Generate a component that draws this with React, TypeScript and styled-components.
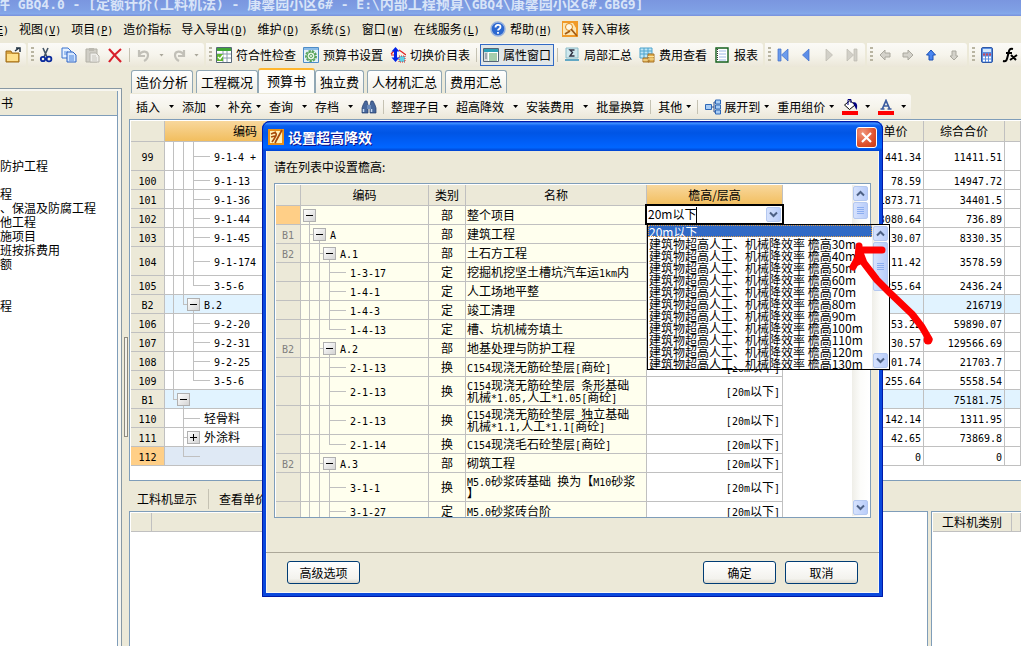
import React from 'react';
import styled, { createGlobalStyle, css } from 'styled-components';

const BEIGE = '#ece9d8';
const LINE = '#c0c0c0';
const FRAME = '#7f9db9';
const ORANGE = 'linear-gradient(#f8d79c, #f2be5e)';

const GlobalStyle = createGlobalStyle`
  *, *::before, *::after { box-sizing: border-box; }
  body {
    margin: 0;
    overflow: hidden;
    background: ${BEIGE};
    color: #000;
    font: 12px/14px 'Noto Sans CJK SC', sans-serif;
  }
  button, input, select { font: inherit; color: inherit; margin: 0; }
`;

/* Latin letters and digits take half the width of a Chinese character. */
const Half = styled.span`
  font-family: 'DejaVu Sans Mono', monospace;
  font-size: 10px;
  line-height: 0;
`;

function Mixed({ children }: { children: string }) {
  return (
    <>
      {children.split(/([\x20-\x7e]+)/).filter(Boolean).map((part, i) =>
        /^[\x20-\x7e]+$/.test(part) ? <Half key={i}>{part}</Half> : part
      )}
    </>
  );
}

/* ---------- window frame ---------- */

const Window = styled.div`
  position: relative;
  display: flex;
  flex-direction: column;
  height: 100vh;
  overflow: hidden;
`;

const TitleBar = styled.header`
  flex: none;
  display: flex;
  align-items: flex-end;
  height: 16px;
  padding-bottom: 5px;
  overflow: hidden;
  background: linear-gradient(#7a96df, #7f9fe4 60%, #84a8ea 85%, #7890dc);
  color: #d8e4f8;
  font-size: 14px;
  font-weight: bold;
  line-height: 16px;
  white-space: pre;
  ${Half} { font-size: 13px; }
`;

const TitleText = styled.span`
  margin-left: -4px;
`;

const MenuBar = styled.nav`
  flex: none;
  display: flex;
  align-items: center;
  gap: 10px;
  height: 26px;
  margin-left: -9px;
`;

const MenuItem = styled.button`
  display: flex;
  align-items: center;
  gap: 4px;
  flex: none;
  padding: 0;
  border: 0;
  background: none;
  white-space: nowrap;
`;

const ToolRow = styled.div`
  flex: none;
  display: flex;
  gap: 2px;
  padding: 1px 0;
`;

const ToolGroup = styled.div<{ $first?: boolean }>`
  flex: none;
  display: flex;
  align-items: center;
  gap: 1px;
  height: 24px;
  padding: 0 2px 0 ${p => (p.$first ? 2 : 3)}px;
  border-radius: 0 3px 3px 0;
  background: linear-gradient(#fbfaf7, #f6f4ec 50%, #ebe7d8);
`;

const Grip = styled.span`
  width: 3px;
  height: 16px;
  background: repeating-linear-gradient(#b9b5a2 0 2px, transparent 2px 4px);
`;

const ToolButton = styled.button<{ $active?: boolean }>`
  flex: none;
  display: flex;
  align-items: center;
  gap: 4px;
  height: 22px;
  padding: 0 2px;
  border: 1px solid ${p => (p.$active ? '#316ac5' : 'transparent')};
  background: ${p => (p.$active ? '#e1e6e8' : 'none')};
  white-space: nowrap;
`;

const Divider = styled.span`
  flex: none;
  width: 1px;
  height: 14px;
  margin: 0 2px;
  background: #c5c2b3;
`;

const Caret = styled.span<{ $dim?: boolean }>`
  width: 5px;
  height: 3px;
  background: ${p => (p.$dim ? '#aaa79b' : '#000')};
  clip-path: polygon(0 0, 100% 0, 50% 100%);
`;

/* ---------- body ---------- */

const Body = styled.div`
  flex: 1;
  display: flex;
  min-height: 0;
`;

const SidePanel = styled.aside`
  flex: none;
  display: flex;
  width: 122px;
  margin-top: 20px;
  padding: 2px 3px 0 0;
  border: solid #8798a4;
  border-width: 1px 1px 0 0;
  background: #f7f6f0;
`;

const SideInner = styled.div`
  flex: 1;
  border-right: 1px solid ${FRAME};
  background: #fff;
`;

const SideHeader = styled.div`
  height: 25px;
  padding: 0 1px;
  border-bottom: 1px solid ${FRAME};
  background: ${BEIGE};
  line-height: 24px;
`;

const TreeList = styled.ul`
  margin: 0;
  padding: 1px 0;
  list-style: none;
`;

const TreeItem = styled.li`
  height: 14px;
  white-space: nowrap;
`;

const Splitter = styled.div`
  flex: none;
  width: 7px;
  padding: 269px 1px 0 2px;
`;

const SplitHandle = styled.div`
  height: 100px;
  border: 1px solid #8c8a80;
  background: #f4f2ea;
`;

const Main = styled.main`
  flex: 1;
  display: flex;
  flex-direction: column;
  min-width: 0;
`;

const Tabs = styled.div`
  flex: none;
  display: flex;
  align-items: flex-end;
  gap: 3px;
  height: 25px;
  padding-left: 2px;
`;

const Tab = styled.button<{ $active?: boolean }>`
  flex: none;
  height: 23px;
  padding: 0 4px;
  border: 1px solid #91a7b4;
  border-bottom: 0;
  border-radius: 3px 3px 0 0;
  background: linear-gradient(#fff, #f1efe6);
  font-size: 13px;
  white-space: nowrap;
  ${p => p.$active && css`
    height: 25px;
    margin: 0 -3px;
    padding: 0 8px 2px;
    border-top: 2px solid #ffb62f;
    background: #fcfcfa;
  `}
`;

const SubTools = styled.div`
  flex: none;
  align-self: flex-start;
  display: flex;
  align-items: center;
  height: 25px;
  margin: 1px 0 0 1px;
  padding: 0 1px 0 2px;
  border-radius: 0 3px 0 0;
  background: linear-gradient(#fbfaf7, #f6f4ec 50%, #ebe7d8);
  ${Divider} { margin: 0 3px 0 2px; }
`;

const SubButton = styled.button<{ $gap?: number }>`
  flex: none;
  display: flex;
  align-items: center;
  gap: ${p => p.$gap ?? 9}px;
  padding: 0 4px;
  border: 0;
  background: none;
  white-space: nowrap;
`;

const IconLabel = styled.span`
  display: flex;
  align-items: center;
  gap: 3px;
`;

const GridPanel = styled.section`
  flex: none;
  padding: 1px 0 14px 1px;
  border: solid ${FRAME};
  border-width: 1px 0 1px 1px;
  background: #fff;
`;

/* ---------- tables ---------- */

const Table = styled.table<{ $width?: string }>`
  width: ${p => p.$width ?? '100%'};
  table-layout: fixed;
  border-collapse: separate;
  border-spacing: 0;
  line-height: 12px;
`;

const Col = styled.col<{ $w?: number }>`
  width: ${p => (p.$w ? `${p.$w}px` : 'auto')};
`;

const Th = styled.th<{ $hot?: boolean }>`
  height: 21px;
  padding: 0;
  border: solid ${LINE};
  border-width: 0 1px 1px 0;
  background: ${p => (p.$hot ? ORANGE : BEIGE)};
  font-weight: normal;
  white-space: nowrap;
`;

const Td = styled.td<{ $bg?: string; $align?: string; $tall?: boolean; $muted?: boolean }>`
  height: ${p => (p.$tall ? 29 : 19)}px;
  padding: 0 2px 1px 1px;
  border: solid ${LINE};
  border-width: 0 1px 1px 0;
  background: ${p => p.$bg ?? '#fff'};
  color: ${p => (p.$muted ? '#808080' : '#000')};
  text-align: ${p => p.$align ?? 'left'};
  vertical-align: middle;
  white-space: pre;
  overflow: hidden;
`;

const CodeTd = styled(Td)`
  padding: 0;
`;

const NumTd = styled(Td)`
  padding: 0 0 1px;
  text-align: center;
`;

const CodeLine = styled.div<{ $tall?: boolean; $root?: boolean }>`
  display: flex;
  align-items: center;
  height: ${p => (p.$tall ? 28 : 18)}px;
  padding-left: ${p => (p.$root ? 2 : 8)}px;
`;

const ink = `linear-gradient(${LINE}, ${LINE})`;

const Guide = styled.span<{ $kind: string; $w: number }>`
  flex: none;
  align-self: stretch;
  width: ${p => p.$w}px;
  margin-bottom: -1px;
  background-repeat: no-repeat;
  ${p => p.$kind === '|' && css`
    background-image: ${ink};
    background-size: 1px 100%;
  `}
  ${p => (p.$kind === 't' || p.$kind === 'l') && css`
    background-image: ${ink}, ${ink};
    background-size: 1px ${p.$kind === 't' ? '100%' : '50%'}, 100% 1px;
    background-position: 0 0, 0 50%;
  `}
`;

const ToggleSlot = styled.span<{ $open?: boolean }>`
  flex: none;
  align-self: stretch;
  display: flex;
  align-items: center;
  margin-bottom: -1px;
  background: ${p => (p.$open ? ink : 'none')} 6px 100% / 1px 50% no-repeat;
`;

const Toggle = styled.button`
  display: flex;
  width: 13px;
  height: 13px;
  padding: 0;
  border: 1px solid #b0b0b0;
  background: linear-gradient(135deg, #fff, #d4d4d4);
`;

const CodeText = styled.span`
  margin-left: 4px;
`;

interface Code { g: string; box?: '-' | '+'; text?: string; root?: boolean }

function CodeCell({ code, bg, tall }: { code: Code; bg?: string; tall?: boolean }) {
  const marks = code.g.split('');
  return (
    <CodeTd $bg={bg} $tall={tall}>
      <CodeLine $tall={tall} $root={code.root}>
        {marks.map((k, i) => (
          <Guide key={i} $kind={k} $w={i < marks.length - 1 ? 10 : code.box ? 4 : 17} />
        ))}
        {code.box && (
          <ToggleSlot $open={code.box === '-'}>
            <Toggle aria-label={code.box === '-' ? '折叠' : '展开'}>
              <svg width="11" height="11" viewBox="0 0 11 11" shapeRendering="crispEdges">
                <path d={code.box === '-' ? 'M2 5h7v1H2z' : 'M2 5h7v1H2zM5 2h1v7H5z'} fill="#000" />
              </svg>
            </Toggle>
          </ToggleSlot>
        )}
        {code.text && <CodeText><Mixed>{code.text}</Mixed></CodeText>}
      </CodeLine>
    </CodeTd>
  );
}

const BLUE_ROW = '#e1f3ff';
const SEL_ROW = '#dfe9f5';

interface MainRow { no: string; code: Code; price: string; total: string; tall?: boolean; bg?: string }
const mainRows: MainRow[] = [
  { no: '99', code: { g: '||t', text: '9-1-4 +' }, price: '441.34', total: '11411.51', tall: true },
  { no: '100', code: { g: '||t', text: '9-1-13' }, price: '78.59', total: '14947.72' },
  { no: '101', code: { g: '||t', text: '9-1-36' }, price: '1873.71', total: '34401.5' },
  { no: '102', code: { g: '||t', text: '9-1-44' }, price: '3080.64', total: '736.89' },
  { no: '103', code: { g: '||t', text: '9-1-45' }, price: '30.07', total: '8330.35' },
  { no: '104', code: { g: '||t', text: '9-1-174' }, price: '11.42', total: '3578.59', tall: true },
  { no: '105', code: { g: '||l', text: '3-5-6' }, price: '255.64', total: '2436.24' },
  { no: 'B2', code: { g: '|l', box: '-', text: 'B.2' }, price: '', total: '216719', bg: BLUE_ROW },
  { no: '106', code: { g: '| t', text: '9-2-20' }, price: '53.22', total: '59890.07' },
  { no: '107', code: { g: '| t', text: '9-2-31' }, price: '30.57', total: '129566.69' },
  { no: '108', code: { g: '| t', text: '9-2-25' }, price: '01.74', total: '21703.7' },
  { no: '109', code: { g: '| l', text: '3-5-6' }, price: '255.64', total: '5558.54' },
  { no: 'B1', code: { g: 'l', box: '-' }, price: '', total: '75181.75', bg: BLUE_ROW },
  { no: '110', code: { g: ' t', text: '轻骨料' }, price: '142.14', total: '1311.95' },
  { no: '111', code: { g: ' t', box: '+', text: '外涂料' }, price: '42.65', total: '73869.8' },
  { no: '112', code: { g: ' l' }, price: '0', total: '0', bg: SEL_ROW },
];

interface DialogRow { no: string; code: Code; kind: string; name: string; tall?: boolean }
const dialogRows: DialogRow[] = [
  { no: '', code: { g: '', box: '-', root: true }, kind: '部', name: '整个项目' },
  { no: 'B1', code: { g: 't', box: '-', text: 'A' }, kind: '部', name: '建筑工程' },
  { no: 'B2', code: { g: '|t', box: '-', text: 'A.1' }, kind: '部', name: '土石方工程' },
  { no: '', code: { g: '||t', text: '1-3-17' }, kind: '定', name: '挖掘机挖坚土槽坑汽车运1km内' },
  { no: '', code: { g: '||t', text: '1-4-1' }, kind: '定', name: '人工场地平整' },
  { no: '', code: { g: '||t', text: '1-4-3' }, kind: '定', name: '竣工清理' },
  { no: '', code: { g: '||l', text: '1-4-13' }, kind: '定', name: '槽、坑机械夯填土' },
  { no: 'B2', code: { g: '|t', box: '-', text: 'A.2' }, kind: '部', name: '地基处理与防护工程' },
  { no: '', code: { g: '||t', text: '2-1-13' }, kind: '换', name: 'C154现浇无筋砼垫层[商砼]' },
  { no: '', code: { g: '||t', text: '2-1-13' }, kind: '换', name: 'C154现浇无筋砼垫层 条形基础\n机械*1.05,人工*1.05[商砼]', tall: true },
  { no: '', code: { g: '||t', text: '2-1-13' }, kind: '换', name: 'C154现浇无筋砼垫层 独立基础\n机械*1.1,人工*1.1[商砼]', tall: true },
  { no: '', code: { g: '||l', text: '2-1-14' }, kind: '换', name: 'C154现浇毛石砼垫层[商砼]' },
  { no: 'B2', code: { g: '|t', box: '-', text: 'A.3' }, kind: '部', name: '砌筑工程' },
  { no: '', code: { g: '||t', text: '3-1-1' }, kind: '换', name: 'M5.0砂浆砖基础 换为【M10砂浆\n】', tall: true },
  { no: '', code: { g: '||t', text: '3-1-27' }, kind: '定', name: 'M5.0砂浆砖台阶' },
];

/* ---------- lower area ---------- */

const LowerTabs = styled.div`
  flex: none;
  display: flex;
  align-items: center;
  height: 30px;
  padding: 5px 0 0 2px;
  ${Divider} { height: 20px; margin: 0 4px 0 5px; }
`;

const LowerTab = styled.button`
  padding: 0 6px;
  border: 0;
  background: none;
`;

const LowerPanels = styled.div`
  flex: 1;
  display: flex;
  gap: 3px;
  min-height: 0;
`;

const LowerPanel = styled.section<{ $side?: boolean }>`
  flex: ${p => (p.$side ? '0 0 90px' : '1')};
  padding: 1px 0 0 1px;
  border: solid ${FRAME};
  border-width: 1px ${p => (p.$side ? 0 : 1)}px 0 1px;
  background: #fff;
  ${Th} { height: 19px; }
`;

/* ---------- dialog ---------- */

const Dialog = styled.div`
  position: absolute;
  left: 262px;
  top: 121px;
  width: 621px;
  border: solid #0a48dc;
  border-width: 0 4px 4px;
  border-radius: 8px 8px 0 0;
  background: ${BEIGE};
  box-shadow: inset 0 0 0 1px #f8f7f2;
  outline: 1px solid #0019a8;
  outline-offset: -1px;
`;

const DialogTitle = styled.div`
  display: flex;
  align-items: center;
  gap: 4px;
  height: 30px;
  margin: 0 -4px;
  padding: 2px 6px 0;
  border-radius: 8px 8px 0 0;
  background: linear-gradient(#0a3ec8, #3a8bff 8%, #0a5ff0 16%, #0055e5 40%, #0060fa 75%, #0066ff 88%, #0042cf);
  color: #fff;
  font-size: 14px;
  font-weight: bold;
  text-shadow: 1px 1px #0f1089;
`;

const CloseButton = styled.button`
  display: flex;
  align-items: center;
  justify-content: center;
  width: 21px;
  height: 21px;
  margin-left: auto;
  padding: 0;
  border: 1px solid #fff;
  border-radius: 3px;
  background: radial-gradient(circle at 30% 25%, #f0977c, #e0512c 60%, #c43a14);
`;

const DialogBody = styled.div`
  padding: 0 8px 34px;
`;

const Prompt = styled.p`
  margin: 0;
  height: 32px;
  line-height: 32px;
`;

const ListFrame = styled.div`
  display: flex;
  justify-content: space-between;
  height: 335px;
  padding: 1px;
  overflow: hidden;
  border: 1px solid ${FRAME};
  background: #fff;
`;

const ScrollTrack = styled.div`
  flex: none;
  display: flex;
  flex-direction: column;
  width: 17px;
  padding: 1px;
  background: linear-gradient(90deg, #efeee8, #fcfcfa 50%, #fff);
`;

const scrollPart = css`
  flex: none;
  display: flex;
  align-items: center;
  justify-content: center;
  padding: 0;
  border: 1px solid #b4c8f0;
  border-radius: 2px;
  background: linear-gradient(90deg, #d6e2fd, #b9cdfa);
`;

const ScrollButton = styled.button`
  ${scrollPart}
  height: 15px;
`;

const ScrollThumb = styled.div<{ $h: number }>`
  ${scrollPart}
  height: ${p => p.$h}px;
  margin: 1px 0 auto;
`;

const DialogFooter = styled.div`
  display: flex;
  gap: 9px;
  padding: 8px 21px 9px;
  border-top: 1px solid #aca899;
`;

const PushButton = styled.button<{ $pushed?: boolean }>`
  width: 73px;
  height: 23px;
  margin-right: ${p => (p.$pushed ? 'auto' : '0')};
  padding: 0;
  border: 1px solid #003c74;
  border-radius: 3px;
  background: linear-gradient(#fff, #f3f2ed 80%, #dcd8cc);
`;

/* editor laid over the active cell, with its open list */
const Editor = styled.div`
  position: absolute;
  left: 379px;
  top: 83px;
  width: 139px;
  display: flex;
  align-items: center;
  height: 21px;
  padding: 0 1px;
  border: 2px solid #000;
  background: #fff;
`;

const EditorInput = styled.input`
  field-sizing: content;
  height: 16px;
  padding: 0 0 2px;
  border: 0;
  border-right: 1px solid #000;
  outline: 0;
  background: none;
`;

const EditorButton = styled.button`
  ${scrollPart}
  width: 15px;
  height: 15px;
  margin-left: auto;
`;

const Popup = styled.div`
  position: absolute;
  left: 381px;
  top: 103px;
  width: 243px;
  display: flex;
  border: 1px solid #000;
  background: #fff;
`;

const OptionList = styled.select`
  flex: 1;
  height: 144px;
  padding: 0;
  border: 0;
  outline: 0;
  overflow: hidden;
  background: #fff;
  option {
    display: flex;
    align-items: center;
    height: 12px;
    min-height: 12px;
    padding: 0 1px;
  }
  option:checked {
    outline: 1px dotted #e09c46;
    outline-offset: -1px;
    background: linear-gradient(#316ac5, #316ac5);
    -webkit-text-fill-color: #fff;
  }
`;

const Marker = styled.svg`
  position: absolute;
  left: 840px;
  top: 235px;
  pointer-events: none;
`;

/* ---------- icons ---------- */

const icons: Record<string, React.ReactNode> = {
  folder: <><path d="M1 4h5l1 2h7v9H1z" fill="#d9a441" stroke="#9c6a17" /><path d="M2 7h11v7H2z" fill="#ffe08a" /><path d="M10 4l4-3m-3 0h4v4" fill="none" stroke="#234" strokeWidth="1.5" /></>,
  cut: <><path d="M5 1l4 9M10 1L6 10" stroke="#456" strokeWidth="1.6" /><circle cx="5" cy="12" r="2.2" fill="none" stroke="#0a2a9c" strokeWidth="1.8" /><circle cx="11" cy="12" r="2.4" fill="none" stroke="#0a2a9c" strokeWidth="1.8" /></>,
  copy: <><path d="M1 1h6l3 3v7H1z" fill="#e6f1ff" stroke="#3a74d0" /><path d="M3 5h4M3 7h4" stroke="#5a90e0" /><path d="M6 5h6l3 3v7H6z" fill="#d5e7ff" stroke="#2d62c4" /><path d="M8 9h5M8 11h5M8 13h5" stroke="#4a84dc" /></>,
  paste: <><path d="M2 2h11v13H2z" fill="#d0cec6" stroke="#b2b0a6" /><path d="M5 1h5v3H5z" fill="#bbb9b0" /><path d="M6 6h6l3 3v6H6z" fill="#efeeea" stroke="#b8b6ae" /><path d="M8 9h4M8 11h5M8 13h5" stroke="#c8c6be" /></>,
  del: <path d="M2 2l12 13M14 2C9 6 6 9 2 15" fill="none" stroke="#d8202c" strokeWidth="2.2" />,
  undo: <path d="M3 3v6h6M3 8c3-5 9-4 9 0 0 3-2 5-4 6" fill="none" stroke="#c2c0b8" strokeWidth="2.2" />,
  redo: <path d="M13 3v6H7M13 8C10 3 4 4 4 8c0 3 2 5 4 6" fill="none" stroke="#c2c0b8" strokeWidth="2.2" />,
  check: <><path d="M.5.5h15v15H.5z" fill="#fff" stroke="#567" /><path d="M1 1h14v3H1z" fill="#3fa535" /><path d="M1 7h14M1 11h14M7 4v11M11 4v11" stroke="#8a9cac" /><path d="M1 7h6v7H1z" fill="#5db52c" /><path d="M2 10l2 2 3-4" fill="none" stroke="#fff" strokeWidth="1.4" /></>,
  gear: <><path d="M.5.5h15v15H.5z" fill="#e4f1fa" stroke="#4d8cc8" /><path d="M1 1h14v2H1z" fill="#8abce8" /><circle cx="8" cy="9" r="5" fill="none" stroke="#58a45c" strokeWidth="2" strokeDasharray="2.4 1" /><circle cx="8" cy="9" r="4" fill="#e4f4e2" stroke="#58a45c" /><circle cx="8" cy="9" r="1.500" fill="#fff" stroke="#58a45c" /></>,
  swap: <><path d="M1 7l3-3M9 3l3 2 4 3M1 8h3" fill="none" stroke="#e02020" strokeWidth="1.2" /><path d="M9 9h6v6H9z" fill="#5ed0e6" stroke="#e02020" strokeDasharray="1 1" /><path d="M5.500 0l4 4.500H7v6h2.500L5.500 15l-4-4.500H4v-6H1.500z" fill="#0022e8" /></>,
  props: <><path d="M.5 1.500h15v13H.5z" fill="#fff" stroke="#567" /><path d="M1 2h14v3H1z" fill="#2ba0b8" /><path d="M1 5h4v9H1z" fill="#d8dcdc" /><path d="M6 7h8M6 9h8M6 11h8M6 13h8" stroke="#4c9c5a" /><path d="M2 7h2M2 9h2M2 11h2" stroke="#678" /></>,
  sum: <><path d="M2 1h12v10H2z" fill="#cfe8ee" stroke="#8bbcc8" /><path d="M10.500 3H6l2.500 2.500L6 9h4.500" fill="none" stroke="#334" strokeWidth="1.4" /><path d="M1 12h14v2H1z" fill="#62a8c4" /></>,
  cost: <><path d="M1 1h12v10H1z" fill="#bfe6f6" stroke="#4da3cc" /><path d="M1 4h12M1 7h12M5 1v10M9 1v10" stroke="#4da3cc" /><path d="M4 11h6v4H4zM9 7h6v8H9z" fill="#e0b050" stroke="#a8742a" /><path d="M9 9.500h6M9 12h6M4 13h5" stroke="#fbe3a0" /></>,
  report: <><path d="M2 1h12v14H2z" fill="#fff" stroke="#14601e" strokeWidth="1.4" /><path d="M5 4h7M5 7h7M5 10h7M5 13h7" stroke="#9cb8e8" /><path d="M3.500 2v12" stroke="#333" strokeDasharray="1 1" /></>,
  first: <path d="M3 2h3v12H3zM13 2v12L6.500 8z" fill="#6c9cec" stroke="#3c6cc8" strokeWidth=".7" />,
  prev: <path d="M11 2v12L4.500 8z" fill="#5c8ee8" stroke="#3c6cc8" strokeWidth=".7" />,
  next: <path d="M5 2v12l6.500-6z" fill="#d2d0c8" stroke="#bbb9b0" strokeWidth=".7" />,
  last: <path d="M3 2v12l6.500-6zM10 2h3v12h-3z" fill="#d2d0c8" stroke="#bbb9b0" strokeWidth=".7" />,
  left: <path d="M3 8l5-5v3h5v4H8v3z" fill="#d4d2ca" stroke="#aaa89e" />,
  right: <path d="M13 8L8 3v3H3v4h5v3z" fill="#d4d2ca" stroke="#aaa89e" />,
  up: <path d="M8 3l4.500 5H10v5H6V8H3.500z" fill="#4a86f0" stroke="#1c50b4" />,
  down: <path d="M8 13l4-4H10V4H6v5H4z" fill="#d4d2ca" stroke="#aaa89e" />,
  calc: <><rect x="2.500" y=".5" width="11" height="15" rx="1.500" fill="#5b8ee0" stroke="#2d58a8" /><path d="M4 2h8v3H4z" fill="#d4e8fc" /><path d="M4 7.500h8" stroke="#c84858" strokeWidth="2" strokeDasharray="2 1" /><path d="M4 10.500h8M4 13.500h8" stroke="#fff" strokeWidth="2" strokeDasharray="2 1" /></>,
  fx: <path d="M11 2C7 1 7 4 6 8s-1 7-5 6M4 6h6M9 8l5 5M15 8l-7 5" fill="none" stroke="#000" strokeWidth="2" />,
  help: <><circle cx="8" cy="8" r="7" fill="#2c68d0" stroke="#9bb4dc" strokeWidth="1.500" /><path d="M5.500 6.500c0-3.500 5-3.500 5-.5 0 2-2.500 2-2.500 3.500M8 11v1.700" fill="none" stroke="#fff" strokeWidth="1.800" /></>,
  audit: <><path d="M0 0h16v16H0z" fill="#f09a28" /><path d="M1 2h10l3 5v7H1z" fill="#fbe6b4" /><circle cx="7" cy="6" r="3.500" fill="#fff8e4" stroke="#e08818" /><path d="M9 8l6 7M3 13l5-3" stroke="#a05a14" strokeWidth="1.800" /></>,
  find: <><path d="M2 6l2-4h2l1 4v8H1V9zM14 6l-2-4h-2L9 6v8h6V9z" fill="#48689c" stroke="#243c6c" strokeWidth=".7" /><path d="M6 6h4v4H6z" fill="#6c8cbc" /><path d="M2.500 10v3M10.500 10v3" stroke="#c8dcf4" strokeWidth="1.500" /></>,
  expand: <><path d="M6 8h3V3h2M9 8v5h2" fill="none" stroke="#2c4c8c" /><path d="M.5 5.500h6v5h-6zM10.500 1h5v4h-5zM10.500 6h5v4h-5zM10.500 11h5v4h-5z" fill="#a8ccf4" stroke="#2e68b8" /></>,
  bucket: <><path d="M2.500 6L8 1.500l5 4.500-5.500 4.500z" fill="#fff" stroke="#000" /><path d="M6 6V.5h3V4" fill="none" stroke="#000080" /><path d="M11 3c4 0 5 3 3.500 8L12 6z" fill="#000080" /><path d="M0 12h16v4H0z" fill="#f00" /></>,
  fontColor: <><path d="M4.500 9.500L8 1.500l3.500 8M5.500 7h5M2.500 10h4M9.500 10h4" fill="none" stroke="#3c5ca0" strokeWidth="1.700" /><path d="M0 12h16v4H0z" fill="#f00" /></>,
  app: <><path d="M0 0h16v16H0z" fill="#e89018" /><path d="M2 2h12v12H2z" fill="#fff2b8" /><path d="M3 5l5-2M3 8l4-1M7 4c3 0 0 5-3 9M14 1L8 12l-1 2" fill="none" stroke="#a84a08" strokeWidth="1.700" /></>,
};

function Icon({ name }: { name: string }) {
  return <svg width="16" height="16" viewBox="0 0 16 16" aria-hidden="true">{icons[name]}</svg>;
}

function Chevron({ up }: { up?: boolean }) {
  return (
    <svg width="9" height="7" viewBox="0 0 9 7" aria-hidden="true">
      <path d={up ? 'M1 5.500l3.500-3.500L8 5.500' : 'M1 1.500L4.500 5 8 1.500'} fill="none" stroke="#4d6185" strokeWidth="2" />
    </svg>
  );
}

function ThumbGrip() {
  return (
    <svg width="7" height="8" viewBox="0 0 7 8" aria-hidden="true" shapeRendering="crispEdges">
      <path d="M0 0h7v1H0zM0 2h7v1H0zM0 4h7v1H0zM0 6h7v1H0z" fill="#8caef0" />
    </svg>
  );
}

function Tool({ icon, label, active }: { icon: string; label?: string; active?: boolean }) {
  return (
    <ToolButton $active={active} aria-label={label ?? icon}>
      <Icon name={icon} />
      {label}
    </ToolButton>
  );
}

const menus: { text: string; hot?: string; icon?: string }[] = [
  { text: '', hot: 'E' },
  { text: '视图', hot: 'V' },
  { text: '项目', hot: 'P' },
  { text: '造价指标' },
  { text: '导入导出', hot: 'D' },
  { text: '维护', hot: 'D' },
  { text: '系统', hot: 'S' },
  { text: '窗口', hot: 'W' },
  { text: '在线服务', hot: 'L' },
  { text: '帮助', hot: 'H', icon: 'help' },
  { text: '转入审核', icon: 'audit' },
];

const treeItems = ['', '', '', '防护工程', '', '程', '、保温及防腐工程', '他工程', '施项目', '班按拆费用', '额', '', '', '程'];

const heights = [30, 40, 50, 60, 70, 80, 90, 100, 110, 120, 130];

function MenuDrop({ text, gap }: { text: string; gap?: number }) {
  return <SubButton $gap={gap}>{text}<Caret /></SubButton>;
}

function SetupDialog() {
  return (
    <Dialog role="dialog" aria-label="设置超高降效">
      <DialogTitle>
        <Icon name="app" />
        设置超高降效
        <CloseButton aria-label="关闭">
          <svg width="13" height="13" viewBox="0 0 13 13"><path d="M2 2l9 9M11 2l-9 9" stroke="#fff" strokeWidth="2.200" /></svg>
        </CloseButton>
      </DialogTitle>
      <DialogBody>
        <Prompt>请在列表中设置檐高:</Prompt>
        <ListFrame>
          <div>
            <Table $width="507px">
              <colgroup><Col $w={25} /><Col $w={128} /><Col $w={37} /><Col $w={181} /><Col $w={136} /></colgroup>
              <thead>
                <tr><Th /><Th>编码</Th><Th>类别</Th><Th>名称</Th><Th $hot>檐高/层高</Th></tr>
              </thead>
              <tbody>
                {dialogRows.map((r, i) => (
                  <tr key={i}>
                    <NumTd $bg={i === 0 ? '#ffcf87' : BEIGE} $muted><Mixed>{r.no}</Mixed></NumTd>
                    <CodeCell code={r.code} bg="#ffffee" tall={r.tall} />
                    <NumTd $bg="#ffffee">{r.kind}</NumTd>
                    <Td $bg="#ffffee" $tall={r.tall}><Mixed>{r.name}</Mixed></Td>
                    <Td $align="right"><Mixed>[20m以下]</Mixed></Td>
                  </tr>
                ))}
              </tbody>
            </Table>
          </div>
          <ScrollTrack>
            <ScrollButton aria-label="向上"><Chevron up /></ScrollButton>
            <ScrollThumb $h={17}><ThumbGrip /></ScrollThumb>
            <ScrollButton aria-label="向下"><Chevron /></ScrollButton>
          </ScrollTrack>
        </ListFrame>
      </DialogBody>
      <DialogFooter>
        <PushButton $pushed>高级选项</PushButton>
        <PushButton>确定</PushButton>
        <PushButton>取消</PushButton>
      </DialogFooter>
      <Editor>
        <EditorInput aria-label="檐高/层高" defaultValue="20m以下" />
        <EditorButton aria-label="打开列表"><Chevron /></EditorButton>
      </Editor>
      <Popup>
        <OptionList size={12} defaultValue="20" aria-label="檐高">
          <option value="20">20m以下</option>
          {heights.map(h => (
            <option key={h} value={h}>{`建筑物超高人工、机械降效率 檐高${h}m`}</option>
          ))}
        </OptionList>
        <ScrollTrack>
          <ScrollButton aria-label="向上"><Chevron up /></ScrollButton>
          <ScrollThumb $h={49}><ThumbGrip /></ScrollThumb>
          <ScrollButton aria-label="向下"><Chevron /></ScrollButton>
        </ScrollTrack>
      </Popup>
    </Dialog>
  );
}

export default function App() {
  return (
    <Window>
      <GlobalStyle />
      <TitleBar>
        <TitleText><Mixed>{'件 GBQ4.0 - [定额计价(工料机法) - 康馨园小区6# - E:\\内部工程预算\\GBQ4\\康馨园小区6#.GBG9]'}</Mixed></TitleText>
      </TitleBar>
      <MenuBar>
        {menus.map((m, i) => (
          <MenuItem key={i}>
            {m.icon && <Icon name={m.icon} />}
            <span>{m.text}{m.hot && <Half>(<u>{m.hot}</u>)</Half>}</span>
          </MenuItem>
        ))}
      </MenuBar>
      <ToolRow>
        <ToolGroup $first><Tool icon="folder" /></ToolGroup>
        <ToolGroup>
          <Grip /><Tool icon="cut" /><Tool icon="copy" /><Tool icon="paste" /><Tool icon="del" />
          <Divider />
          <Tool icon="undo" /><ToolButton aria-label="撤销列表"><Caret $dim /></ToolButton>
          <Tool icon="redo" /><ToolButton aria-label="恢复列表"><Caret $dim /></ToolButton>
        </ToolGroup>
        <ToolGroup>
          <Grip />
          <Tool icon="check" label="符合性检查" />
          <Tool icon="gear" label="预算书设置" />
          <Tool icon="swap" label="切换价目表" />
          <Divider />
          <Tool icon="props" label="属性窗口" active />
          <Divider />
          <Tool icon="sum" label="局部汇总" />
          <Tool icon="cost" label="费用查看" />
          <Tool icon="report" label="报表" />
        </ToolGroup>
        <ToolGroup><Grip /><Tool icon="first" /><Tool icon="prev" /><Tool icon="next" /><Tool icon="last" /></ToolGroup>
        <ToolGroup><Grip /><Tool icon="left" /><Tool icon="right" /><Tool icon="up" /><Tool icon="down" /></ToolGroup>
        <ToolGroup><Grip /><Tool icon="calc" /><Tool icon="fx" /></ToolGroup>
      </ToolRow>
      <Body>
        <SidePanel>
          <SideInner>
            <SideHeader>书</SideHeader>
            <TreeList>
              {treeItems.map((t, i) => <TreeItem key={i}>{t}</TreeItem>)}
            </TreeList>
          </SideInner>
        </SidePanel>
        <Splitter><SplitHandle /></Splitter>
        <Main>
          <Tabs>
            <Tab>造价分析</Tab>
            <Tab>工程概况</Tab>
            <Tab $active>预算书</Tab>
            <Tab>独立费</Tab>
            <Tab>人材机汇总</Tab>
            <Tab>费用汇总</Tab>
          </Tabs>
          <SubTools>
            <MenuDrop text="插入" />
            <MenuDrop text="添加" />
            <MenuDrop text="补充" gap={4} />
            <MenuDrop text="查询" />
            <MenuDrop text="存档" />
            <SubButton aria-label="查找"><Icon name="find" /></SubButton>
            <Divider />
            <MenuDrop text="整理子目" gap={4} />
            <MenuDrop text="超高降效" />
            <MenuDrop text="安装费用" />
            <SubButton>批量换算</SubButton>
            <Divider />
            <MenuDrop text="其他" gap={4} />
            <Divider />
            <SubButton $gap={4}><IconLabel><Icon name="expand" />展开到</IconLabel><Caret /></SubButton>
            <MenuDrop text="重用组价" gap={4} />
            <SubButton $gap={7} aria-label="填充颜色"><Icon name="bucket" /><Caret /></SubButton>
            <SubButton $gap={7} aria-label="字体颜色"><Icon name="fontColor" /><Caret /></SubButton>
          </SubTools>
          <GridPanel>
            <Table>
              <colgroup><Col $w={34} /><Col $w={161} /><Col /><Col $w={80} /><Col $w={81} /><Col $w={16} /></colgroup>
              <thead>
                <tr><Th /><Th $hot>编码</Th><Th /><Th>综合单价</Th><Th>综合合价</Th><Th /></tr>
              </thead>
              <tbody>
                {mainRows.map((r, i) => (
                  <tr key={i}>
                    <NumTd $bg={r.no === '112' ? '#ffcf87' : BEIGE}><Mixed>{r.no}</Mixed></NumTd>
                    <CodeCell code={r.code} bg={r.bg} tall={r.tall} />
                    <Td $bg={r.bg} />
                    <Td $bg={r.bg === SEL_ROW ? '#fff' : r.bg} $align="right"><Mixed>{r.price}</Mixed></Td>
                    <Td $bg={r.bg === SEL_ROW ? '#fff' : r.bg} $align="right"><Mixed>{r.total}</Mixed></Td>
                    <Td $bg={r.bg === SEL_ROW ? '#fff' : r.bg} />
                  </tr>
                ))}
              </tbody>
            </Table>
          </GridPanel>
          <LowerTabs>
            <LowerTab>工料机显示</LowerTab>
            <Divider />
            <LowerTab>查看单价构成</LowerTab>
          </LowerTabs>
          <LowerPanels>
            <LowerPanel>
              <Table $width="50%">
                <colgroup><Col $w={21} /><Col /></colgroup>
                <thead><tr><Th /><Th /></tr></thead>
              </Table>
            </LowerPanel>
            <LowerPanel $side>
              <Table>
                <colgroup><Col $w={79} /><Col /></colgroup>
                <thead><tr><Th>工料机类别</Th><Th /></tr></thead>
              </Table>
            </LowerPanel>
          </LowerPanels>
        </Main>
      </Body>
      <SetupDialog />
      <Marker width="100" height="115" viewBox="840 235 100 115" aria-hidden="true">
        <path d="M882 250L859 250M859 246L858 258L853 267M859 250L864 263L877 280L890 293L912 314L922 327L929 339" fill="none" stroke="#f00" strokeWidth="7" strokeLinecap="round" strokeLinejoin="round" />
        <path d="M856 246h6v18l-5 2z" fill="#f00" />
        <circle cx="928" cy="340" r="4.500" fill="#f00" />
      </Marker>
    </Window>
  );
}
